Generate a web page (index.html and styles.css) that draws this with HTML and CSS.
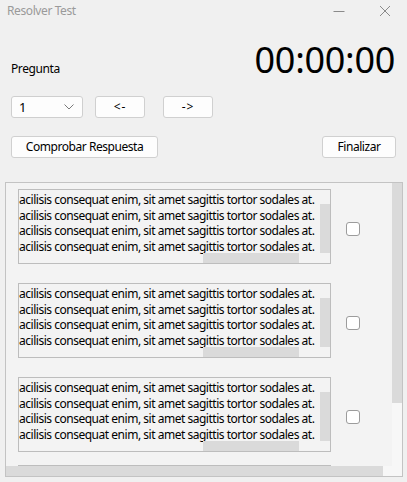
FILE: index.html
```html
<!DOCTYPE html>
<html>
<head>
<meta charset="utf-8">
<link rel="stylesheet" href="styles.css">
</head>
<body>
<div class="window">
  <div class="titlebar">
    <span class="title">Resolver Test</span>
    <div class="controls">
      <svg class="ctl" width="12" height="12" viewBox="0 0 12 12"><path d="M0.5 6.5H11.5" stroke="#8a8a8a" stroke-width="1"/></svg>
      <svg class="ctl" width="12" height="12" viewBox="0 0 12 12"><path d="M1 1L11 11M11 1L1 11" stroke="#8a8a8a" stroke-width="1"/></svg>
    </div>
  </div>

  <div class="row1">
    <span class="label">Pregunta</span>
    <span class="timer">00:00:00</span>
  </div>

  <div class="row2">
    <div class="combo">
      <span>1</span>
      <svg width="10" height="6" viewBox="0 0 10 6"><path d="M0.5 0.5L5 5L9.5 0.5" fill="none" stroke="#7a7a7a" stroke-width="1"/></svg>
    </div>
    <button class="btn nav">&lt;-</button>
    <button class="btn nav">-&gt;</button>
  </div>

  <div class="row3">
    <button class="btn check">Comprobar Respuesta</button>
    <button class="btn finish">Finalizar</button>
  </div>

  <div class="panel">
    <div class="list">
      <div class="item">
        <div class="textbox">
          <p>acilisis consequat enim, sit amet sagittis tortor sodales at.</p>
          <p>acilisis consequat enim, sit amet sagittis tortor sodales at.</p>
          <p>acilisis consequat enim, sit amet sagittis tortor sodales at.</p>
          <p>acilisis consequat enim, sit amet sagittis tortor sodales at.</p>
          <span class="tb-vs"></span><span class="tb-hs"></span>
        </div>
        <span class="checkbox"></span>
      </div>
      <div class="item">
        <div class="textbox">
          <p>acilisis consequat enim, sit amet sagittis tortor sodales at.</p>
          <p>acilisis consequat enim, sit amet sagittis tortor sodales at.</p>
          <p>acilisis consequat enim, sit amet sagittis tortor sodales at.</p>
          <p>acilisis consequat enim, sit amet sagittis tortor sodales at.</p>
          <span class="tb-vs"></span><span class="tb-hs"></span>
        </div>
        <span class="checkbox"></span>
      </div>
      <div class="item">
        <div class="textbox">
          <p>acilisis consequat enim, sit amet sagittis tortor sodales at.</p>
          <p>acilisis consequat enim, sit amet sagittis tortor sodales at.</p>
          <p>acilisis consequat enim, sit amet sagittis tortor sodales at.</p>
          <p>acilisis consequat enim, sit amet sagittis tortor sodales at.</p>
          <span class="tb-vs"></span><span class="tb-hs"></span>
        </div>
        <span class="checkbox"></span>
      </div>
      <div class="item last">
        <div class="textbox"></div>
        <span class="checkbox"></span>
      </div>
    </div>
    <div class="vscroll"><div class="vthumb"></div></div>
    <div class="hscroll"><div class="hthumb"></div></div>
    <div class="corner"></div>
  </div>
</div>
</body>
</html>
```

FILE: styles.css
```css
* { box-sizing: border-box; }
html, body { margin: 0; padding: 0; }
body {
  background: #f0f0f0;
  font-family: "Noto Sans", "Open Sans", sans-serif;
  font-size: 12px;
  letter-spacing: -0.4px;
  color: #000;
  width: 407px;
  height: 482px;
  overflow: hidden;
}
.window { width: 407px; height: 482px; display: flex; flex-direction: column; }

.titlebar {
  height: 30px;
  display: flex;
  align-items: flex-start;
  justify-content: space-between;
  padding: 2px 0 0 7px;
}
.title { color: #9a9a9a; font-size: 12px; line-height: 17px; }
.controls { display: flex; gap: 34px; padding: 3px 16px 0 0; }
.ctl { display: block; }

.row1 {
  display: flex;
  justify-content: space-between;
  align-items: baseline;
  padding: 0 12px 0 11px;
  margin-top: 8px;
  height: 52px;
}
.label { font-size: 12px; }
.timer { font-size: 36px; line-height: 44px; letter-spacing: -0.3px; }

.row2 {
  display: flex;
  align-items: center;
  padding-left: 11px;
  height: 22px;
  margin-top: 6px;
}
.combo {
  width: 72px;
  height: 22px;
  background: #fdfdfd;
  border: 1px solid #cfcfcf;
  border-radius: 3px;
  display: flex;
  align-items: center;
  justify-content: space-between;
  padding: 0 8px 0 7px;
  font-size: 13px;
}
.combo svg { display: block; }
.btn {
  font-family: inherit;
  font-size: 12px;
  letter-spacing: -0.45px;
  height: 22px;
  background: #fdfdfd;
  border: 1px solid #d0d0d0;
  border-radius: 3px;
  padding: 0;
  color: #000;
  line-height: 18px;
}
.nav { width: 50px; margin-left: 12px; letter-spacing: 1px; }
.nav + .nav { margin-left: 18px; }

.row3 {
  display: flex;
  justify-content: space-between;
  padding: 0 11px;
  margin-top: 18px;
  height: 22px;
}
.check { width: 147px; }
.finish { width: 74px; }

.panel {
  margin: 24px 0 0 5px;
  width: 398px;
  height: 295px;
  border: 1px solid #c3c3c3;
  background: #f3f3f3;
  display: grid;
  grid-template-columns: 1fr 10px;
  grid-template-rows: 1fr 10px;
  overflow: hidden;
}
.list {
  overflow: hidden;
  padding: 6px 0 0 12px;
  display: flex;
  flex-direction: column;
  gap: 19px;
}
.item { display: flex; align-items: flex-start; flex: none; }
.item.last { margin-top: -6px; }
.textbox {
  position: relative;
  width: 313px;
  height: 75px;
  border: 1px solid #bdbdbd;
  background: #f3f3f3;
  padding: 2px 0 0 0;
  overflow: hidden;
  flex: none;
}
.textbox p {
  margin: 0;
  line-height: 15.5px;
  font-size: 12px;
  white-space: nowrap;
  letter-spacing: -0.48px;
}
.tb-vs {
  position: absolute;
  right: 0;
  top: 14px;
  width: 10px;
  height: 49px;
  background: #dadada;
}
.tb-hs {
  position: absolute;
  left: 184px;
  bottom: 0;
  width: 96px;
  height: 10px;
  background: #dadada;
}
.checkbox {
  width: 14px;
  height: 14px;
  margin: 33px 0 0 15px;
  border: 1px solid #9c9c9c;
  border-radius: 3px;
  background: #fff;
  flex: none;
}
.vscroll { background: #f7f7f7; }
.vthumb { height: 220px; background: #dadada; }
.hscroll { background: #f7f7f7; }
.hthumb { width: 377px; height: 10px; background: #dadada; }
.corner { background: #f7f7f7; }
```
